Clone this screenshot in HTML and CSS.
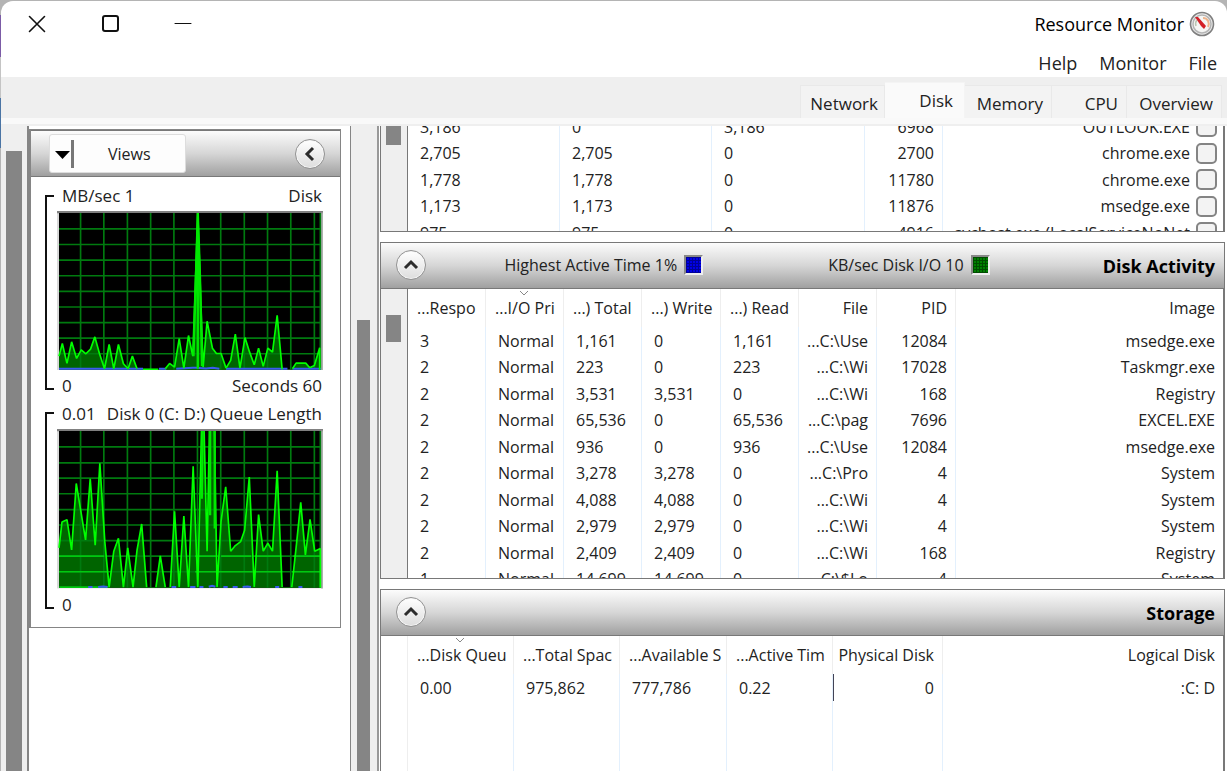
FILE: index.html
```html
<!DOCTYPE html>
<html lang="en">
<head>
<meta charset="utf-8">
<title>Resource Monitor</title>
<link rel="stylesheet" href="styles.css">
</head>
<body>
<div class="window">
  <header class="titlebar">
    <div class="controls">
      <button class="control" aria-label="Close"><svg width="18" height="18" viewBox="0 0 18 18"><path d="M1.500 1.500L16.500 16.500M16.500 1.500L1.500 16.500" class="stroke"/></svg></button>
      <button class="control" aria-label="Maximize"><svg width="18" height="18" viewBox="0 0 18 18"><rect x="2" y="1" width="15" height="15" rx="2" class="stroke bold"/></svg></button>
      <button class="control" aria-label="Minimize"><svg width="18" height="18" viewBox="0 0 18 18"><path d="M1 8.500H17" class="stroke thin"/></svg></button>
    </div>
    <h1 class="app-title">Resource Monitor</h1>
    <svg class="gauge" width="26" height="26" viewBox="0 0 26 26">
      <circle cx="13" cy="13" r="11.500" fill="#e9e9e9" stroke="#7f7f7f" stroke-width="1.600"/>
      <circle cx="13" cy="13" r="9" fill="#f6f6f4" stroke="#b5b5b5" stroke-width="1.500"/>
      <path d="M7 15a6 6 0 0 1 1-6" fill="none" stroke="#b9c4b0" stroke-width="1.500"/>
      <path d="M14 7c5 0 7 5 5 9" fill="none" stroke="#efb48c" stroke-width="2"/>
      <path d="M6 6L9 6L17 15L15 18L12 15Z" fill="#d42027"/>
    </svg>
  </header>
  <nav class="menu">
    <button>Help</button><button>Monitor</button><button>File</button>
  </nav>
  <div class="tabs" role="tablist">
    <button class="tab network" role="tab">Network</button>
    <button class="tab disk active" role="tab" aria-selected="true">Disk</button>
    <button class="tab memory" role="tab">Memory</button>
    <button class="tab cpu" role="tab">CPU</button>
    <button class="tab overview" role="tab">Overview</button>
  </div>
  <div class="strip"></div>
  <main class="body">
    <div class="track outer"><div class="thumb"></div></div>
    <aside class="side">
      <div class="views-box">
        <div class="bar">
          <button class="views"><svg width="24" height="28" viewBox="0 0 24 28"><path d="M0 11H15L7.500 19Z" fill="#000"/><path d="M17.500 0V28" stroke="#777" stroke-width="3"/></svg><span>Views</span></button>
          <button class="round" aria-label="Collapse"><svg width="16" height="16" viewBox="0 0 16 16"><path d="M11 2L5 8L11 14" class="chev"/></svg></button>
        </div>
        <div class="charts">
          <section class="chart">
            <div class="bracket"></div>
            <div>
              <div class="caption"><span>MB/sec 1</span><span>Disk</span></div>
              <svg class="plot" viewBox="111 93 801 480">
                <rect x="111" y="93" width="801" height="480" fill="#d8d8d8"/><path d="M111 96H912" stroke="#808080" stroke-width="7"/><path d="M909 96V573" stroke="#999" stroke-width="4"/>
                <rect x="117" y="99" width="789" height="472" fill="#000"/>
                <path class="area" d="M117 571V530L127 492L141 552L155 487L170 537L184 511L198 523L212 509L225 472L239 523L254 568L268 495L282 568L296 495L311 553L325 568L338 530L352 568H437L450 552L465 563L479 477L493 566L507 468L520 530L535 99L551 563L563 425L579 506L591 522H605L620 566L634 543L648 464L662 566L677 474L691 518L705 556L718 506L732 561L746 506L760 518L774 407L789 570H820L831 551H860L872 565L886 558L902 505L906 505V571Z"/>
                <path class="grid" d="M182 99V571M252 99V571M323 99V571M393 99V571M463 99V571M534 99V571M604 99V571M675 99V571M745 99V571M815 99V571M886 99V571M904 99V571M117 147H906M117 194H906M117 241H906M117 288H906M117 335H906M117 382H906M117 429H906M117 476H906M117 523H906"/>
                <path d="M117 568H370M418 568H440M470 568L520 565H530L560 567L580 565L600 568M620 568H805M820 568H906" class="blue"/>
                <path class="trace" d="M117 530L127 492L141 552L155 487L170 537L184 511L198 523L212 509L225 472L239 523L254 568L268 495L282 568L296 495L311 553L325 568L338 530L352 568M370 570H415M437 568L450 552L465 563L479 477L493 566L507 468L520 530L535 99L551 563L563 425L579 506L591 522H605L620 566L634 543L648 464L662 566L677 474L691 518L705 556L718 506L732 561L746 506L760 518L774 407L789 570M820 568L831 551H860L872 565L886 558L902 505V571"/>
                <path class="peak" d="M530 270L535 99L541 270L548 560M530 270L522 530M535 99V568"/>
              </svg>
              <div class="caption foot"><span>0</span><span>Seconds 60</span></div>
            </div>
          </section>
          <section class="chart second">
            <div class="bracket"></div>
            <div>
              <div class="caption"><span>0.01</span><span>Disk 0 (C: D:) Queue Length</span></div>
              <svg class="plot" viewBox="111 120 801 480">
                <rect x="111" y="120" width="801" height="480" fill="#d8d8d8"/><path d="M111 123H912" stroke="#808080" stroke-width="7"/><path d="M909 123V600" stroke="#999" stroke-width="4"/>
                <rect x="117" y="126" width="789" height="472" fill="#000"/>
                <path class="area" d="M117 598V478L126 400L141 393L155 484L169 284L197 454L211 270L226 470L240 223L255 460L268 596L282 488L296 449L311 596L324 478L340 596L352 485L366 406L381 596H409L422 502L437 596H452L465 368L479 596L493 382L507 596L521 232L535 596L546 126H554L563 488L570 126H585L593 596L605 398L619 294L634 488L648 471L664 459L676 425L690 265L705 596L718 378L732 488L746 464L760 488L774 246L789 596H818L832 468L845 341L859 499L873 392L887 488L906 480V598Z"/>
                <path class="grid" d="M182 126V598M252 126V598M323 126V598M393 126V598M463 126V598M534 126V598M604 126V598M675 126V598M745 126V598M815 126V598M886 126V598M904 126V598M117 174H906M117 222H906M117 268H906M117 315H906M117 363H906M117 409H906M117 456H906M117 503H906M117 550H906"/>
                <path class="inner" d="M117 503H253M117 550H262M605 503H696M118 596H265M593 550H700M707 503H785M707 550H786M823 503H905M819 550H905M527 503H590M527 550H590"/>
                <path class="trace" d="M117 478L126 400L141 393L155 484L169 284L197 454L211 270L226 470L240 223L255 460L268 596L282 488L296 449L311 596L324 478L340 596L352 485L366 406L381 596M409 596L422 502L437 596M452 596L465 368L479 596L493 382L507 596L521 232L535 596L546 126M554 126L563 488L570 126M585 126L593 596L605 398L619 294L634 488L648 471L664 459L676 425L690 265L705 596L718 378L732 488L746 464L760 488L774 246L789 596M818 596L832 468L845 341L859 499L873 392L887 488L904 480V598"/>
                <path class="peak" d="M550 126L547 330M572 126V380M586 126V420"/>
                <path d="M205 596H218M235 596L250 594L263 596M456 596H470M512 596H528M540 596H552M568 595L578 592L588 595M612 596H625M640 596H655M670 596L684 594L695 596M768 596H780M838 596H850" class="blue"/>
              </svg>
              <div class="caption foot"><span>0</span></div>
            </div>
          </section>
        </div>
      </div>
    </aside>
    <div class="track middle"><div class="thumb"></div></div>
    <div class="panels">
      <section class="panel processes">
        <div class="track inside"><div class="thumb"></div></div>
        <div class="scroll">
          <table>
            <colgroup><col class="w152"><col class="w152"><col class="w153"><col class="w78"><col></colgroup>
            <tbody>
              <tr><td>3,186</td><td>0</td><td>3,186</td><td class="r">6968</td><td class="r"><label>OUTLOOK.EXE<input type="checkbox"></label></td></tr>
              <tr><td>2,705</td><td>2,705</td><td>0</td><td class="r">2700</td><td class="r"><label>chrome.exe<input type="checkbox"></label></td></tr>
              <tr><td>1,778</td><td>1,778</td><td>0</td><td class="r">11780</td><td class="r"><label>chrome.exe<input type="checkbox"></label></td></tr>
              <tr><td>1,173</td><td>1,173</td><td>0</td><td class="r">11876</td><td class="r"><label>msedge.exe<input type="checkbox"></label></td></tr>
              <tr><td>975</td><td>975</td><td>0</td><td class="r">4916</td><td class="r"><label>svchost.exe (LocalServiceNoNet<input type="checkbox"></label></td></tr>
            </tbody>
          </table>
        </div>
      </section>
      <section class="panel-group">
        <div class="bar panel-bar">
          <button class="round" aria-label="Collapse Disk Activity"><svg width="16" height="16" viewBox="0 0 16 16"><path d="M2 11L8 5L14 11" class="chev"/></svg></button>
          <div class="meters">
            <span class="meter">Highest Active Time 1%<i class="swatch sw-blue"></i></span>
            <span class="meter">KB/sec Disk I/O 10<i class="swatch sw-green"></i></span>
          </div>
          <h2>Disk Activity</h2>
        </div>
        <div class="panel activity">
          <div class="track inside"><div class="thumb"></div></div>
          <div class="scroll">
            <table>
              <colgroup><col class="w78"><col class="w78"><col class="w78"><col class="w79"><col class="w78"><col class="w78"><col class="w79"><col></colgroup>
              <thead><tr><th>...Respo</th><th class="sorted">...I/O Pri<svg class="sort" width="10" height="6" viewBox="0 0 10 6"><path d="M1 1L5 5L9 1"/></svg></th><th>...) Total</th><th>...) Write</th><th>...) Read</th><th class="r">File</th><th class="r">PID</th><th class="r">Image</th></tr></thead>
              <tbody>
                <tr><td>3</td><td>Normal</td><td>1,161</td><td>0</td><td>1,161</td><td class="r">...C:\Use</td><td class="r">12084</td><td class="r">msedge.exe</td></tr>
                <tr><td>2</td><td>Normal</td><td>223</td><td>0</td><td>223</td><td class="r">...C:\Wi</td><td class="r">17028</td><td class="r">Taskmgr.exe</td></tr>
                <tr><td>2</td><td>Normal</td><td>3,531</td><td>3,531</td><td>0</td><td class="r">...C:\Wi</td><td class="r">168</td><td class="r">Registry</td></tr>
                <tr><td>2</td><td>Normal</td><td>65,536</td><td>0</td><td>65,536</td><td class="r">...C:\pag</td><td class="r">7696</td><td class="r">EXCEL.EXE</td></tr>
                <tr><td>2</td><td>Normal</td><td>936</td><td>0</td><td>936</td><td class="r">...C:\Use</td><td class="r">12084</td><td class="r">msedge.exe</td></tr>
                <tr><td>2</td><td>Normal</td><td>3,278</td><td>3,278</td><td>0</td><td class="r">...C:\Pro</td><td class="r">4</td><td class="r">System</td></tr>
                <tr><td>2</td><td>Normal</td><td>4,088</td><td>4,088</td><td>0</td><td class="r">...C:\Wi</td><td class="r">4</td><td class="r">System</td></tr>
                <tr><td>2</td><td>Normal</td><td>2,979</td><td>2,979</td><td>0</td><td class="r">...C:\Wi</td><td class="r">4</td><td class="r">System</td></tr>
                <tr><td>2</td><td>Normal</td><td>2,409</td><td>2,409</td><td>0</td><td class="r">...C:\Wi</td><td class="r">168</td><td class="r">Registry</td></tr>
                <tr><td>1</td><td>Normal</td><td>14,699</td><td>14,699</td><td>0</td><td class="r">...C:\$Lo</td><td class="r">4</td><td class="r">System</td></tr>
              </tbody>
            </table>
          </div>
        </div>
      </section>
      <section class="panel-group grow">
        <div class="bar panel-bar">
          <button class="round" aria-label="Collapse Storage"><svg width="16" height="16" viewBox="0 0 16 16"><path d="M2 11L8 5L14 11" class="chev"/></svg></button>
          <h2>Storage</h2>
        </div>
        <div class="panel storage">
          <div class="blank"></div>
          <div class="scroll">
            <table>
              <colgroup><col class="w106"><col class="w106"><col class="w107"><col class="w106"><col class="w110"><col></colgroup>
              <thead><tr><th class="sorted">...Disk Queu<svg class="sort" width="10" height="6" viewBox="0 0 10 6"><path d="M1 1L5 5L9 1"/></svg></th><th>...Total Spac</th><th>...Available S</th><th>...Active Tim</th><th class="r">Physical Disk</th><th class="r">Logical Disk</th></tr></thead>
              <tbody>
                <tr><td>0.00</td><td>975,862</td><td>777,786</td><td>0.22</td><td class="r focus">0</td><td class="r">:C: D</td></tr>
                <tr class="fill"><td></td><td></td><td></td><td></td><td></td><td></td></tr>
              </tbody>
            </table>
          </div>
        </div>
      </section>
    </div>
  </main>
</div>
</body>
</html>
```

FILE: styles.css
```css
* { box-sizing: border-box; }
body {
  margin: 0;
  height: 100vh;
  padding: 1px 0 0 1px;
  overflow: hidden;
  background: linear-gradient(#b4b4b4 0 15px, #7b5ba6 15px 57px, #c4c4c4 57px 98px, #4a74a4 98px 148px, #b4b4b4 148px);
  font: 16px/26px "Open Sans", "Noto Sans", sans-serif;
  color: #222;
}
button { font: inherit; color: inherit; border: 0; background: none; padding: 0; }
svg { display: block; }
.window {
  height: 100%;
  display: flex;
  flex-direction: column;
  background: #fff;
  border-radius: 12px 12px 0 0;
  overflow: hidden;
}
.stroke { fill: none; stroke: #111; stroke-width: 1.6; stroke-linecap: round; }
.stroke.bold { stroke-width: 2; }
.stroke.thin { stroke-width: 1; }

.titlebar { display: flex; align-items: center; height: 45px; padding: 0 12px 0 27px; }
.controls { display: flex; gap: 55px; flex: 1; }
.app-title { margin: 0 5px 0 0; font-size: 18px; font-weight: 400; color: #000; }
.menu { display: flex; justify-content: flex-end; gap: 22px; height: 31px; padding: 0 10px 0 0; font-size: 18px; }
.menu button { line-height: 34px; }

.tabs { display: flex; justify-content: flex-end; align-items: flex-end; height: 41px; padding-right: 5px; background: #efefef; font-size: 17px; }
.tab { height: 33px; padding: 4px 8px 0 0; text-align: right; background: #f3f3f3; border: 1px solid #e9e9e9; border-width: 1px 1px 0 0; }
.tab.active { height: 36px; padding: 0 11px 0 0; background: #fafafa; border-color: #f4f4f4; }
.network { width: 85px; padding-right: 6px; border-left-width: 1px; }
.disk { width: 80px; }
.memory { width: 87px; }
.cpu { width: 75px; }
.overview { width: 95px; }
.strip { height: 8px; flex: none; background: #f9f9f9; border-bottom: 2px solid #efefef; }

.body { flex: 1; min-height: 0; display: flex; }
.track { flex: none; background: #efefef; }
.thumb { background: #858585; }
.outer { width: 26px; padding: 25px 5px 0; }
.outer .thumb { height: 100%; }
.middle { width: 28px; padding: 194px 7px 0 6px; border-right: 2px solid #999; }
.middle .thumb { height: 100%; }
.side { flex: none; width: 324px; padding: 3px 9px 0 0; border: 1px solid #858585; border-width: 0 1px 0 2px; }
.views-box { height: 499px; border: 1px solid #858585; border-left-width: 2px; }
.bar {
  display: flex;
  align-items: center;
  height: 47px;
  background: linear-gradient(#fcfcfc, #d6d6d6 50%, #a0a0a0);
  border: 1px solid #787878;
  border-width: 1px 0;
}
.views-box .bar { justify-content: space-between; padding: 0 15px 0 18px; }
.views {
  display: flex;
  align-items: center;
  gap: 29px;
  width: 137px;
  height: 39px;
  padding-left: 5px;
  background: #fdfdfd;
  border: 1px solid #ddd;
  border-radius: 3px;
}
.round {
  flex: none;
  display: grid;
  place-items: center;
  width: 30px;
  height: 30px;
  border: 1px solid #929292;
  border-radius: 50%;
  background: linear-gradient(#fff, #ddd);
  box-shadow: inset 0 0 0 1px #f6f6f6;
}
.chev { fill: none; stroke: #2c2c2c; stroke-width: 3; }

.charts { padding: 6px 17px 0 14px; }
.chart { display: grid; grid-template-columns: 9px 1fr; gap: 3px; }
.bracket { margin: 12px 0; border: 2px solid #111; border-right: 0; }
.second .bracket { margin-top: 10px; }
.caption { display: flex; justify-content: space-between; height: 28px; padding: 0 1px 0 5px; font-size: 17px; line-height: 26px; white-space: nowrap; }
.second .caption { height: 27px; line-height: 24px; }
.chart .foot { height: 32px; line-height: 32px; }
.plot { width: 100%; height: auto; }
.area { fill: #006400; }
.grid { fill: none; stroke: #007a0f; stroke-width: 5; }
.trace { fill: none; stroke: #00ff00; stroke-width: 5; stroke-linejoin: bevel; }
.peak { fill: none; stroke: #00e800; stroke-width: 7; }
.inner { fill: none; stroke: #00c810; stroke-width: 5; }
.blue { fill: none; stroke: #3b5bee; stroke-width: 6; }

.panels { flex: 1; min-width: 0; display: flex; flex-direction: column; gap: 10px; padding: 0 2px 0 1px; }
.panel { display: flex; border: 1px solid #787878; border-width: 0 2px 1px 1px; }
.processes { height: 106px; }
.panel-group { display: flex; flex-direction: column; }
.activity { height: 290px; }
.grow { flex: 1; min-height: 0; }
.storage { flex: 1; min-height: 0; border-bottom: 0; }
.inside { width: 27px; padding: 0 6px 0 5px; border-right: 1px solid #787878; }
.inside .thumb { height: 19px; }
.activity .inside { padding-top: 26px; }
.activity .thumb { height: 27px; }
.blank { width: 27px; flex: none; border-right: 1px solid #eee; }
.scroll { flex: 1; min-width: 0; overflow: hidden; }
.panel-bar { flex: none; padding: 0 9px 2px 15px; border: 1px solid #787878; }
.meters { flex: 1; display: flex; justify-content: flex-end; gap: 125px; margin-right: 113px; }
.meter { display: flex; align-items: center; gap: 7px; }
.swatch { width: 19px; height: 20px; border: 2px solid; border-color: #888 #eee #eee #888; background-size: 3px 3px; }
.sw-blue { background-color: #0000e8; background-image: linear-gradient(#000098 1px, transparent 1px), linear-gradient(90deg, #000098 1px, transparent 1px); }
.sw-green { background-color: #008000; background-image: linear-gradient(#004c00 1px, transparent 1px), linear-gradient(90deg, #004c00 1px, transparent 1px); }
.bar h2 { margin: 0 0 0 auto; padding-top: 2px; font-size: 18px; font-weight: 700; color: #000; }
.meters + h2 { margin-left: 0; }

table { width: 100%; border-collapse: separate; border-spacing: 0; table-layout: fixed; }
.processes table { margin-top: -13px; }
.storage table { height: 100%; }
.w78 { width: 78px; }
.w79 { width: 79px; }
.w152 { width: 152px; }
.w153 { width: 153px; }
.w106 { width: 106px; }
.w107 { width: 107px; }
.w110 { width: 110px; }
th { height: 38px; padding: 0 0 0 9px; border-right: 1px solid #eee; font-weight: 400; text-align: left; white-space: nowrap; }
td { height: 26px; padding: 0 0 0 12px; border-right: 1px solid #e3f0fd; line-height: 26px; white-space: nowrap; }
tr:nth-child(odd) td { height: 27px; }
th:last-child, td:last-child { border-right: 0; }
.r { padding: 0 8px 0 0; text-align: right; }
.sorted { position: relative; }
.sort { position: absolute; top: 1px; left: 50%; margin-left: -6px; fill: none; stroke: #888; }
.focus { border-left: 1px solid #445; }
.processes td:last-child { padding-right: 6px; }
.fill td { height: auto; }
label { display: flex; justify-content: flex-end; align-items: center; gap: 6px; }
input[type="checkbox"] { appearance: none; flex: none; width: 21px; height: 21px; margin: 0; border: 2px solid #848484; border-radius: 5px; background: #f3f3f3; }
```
